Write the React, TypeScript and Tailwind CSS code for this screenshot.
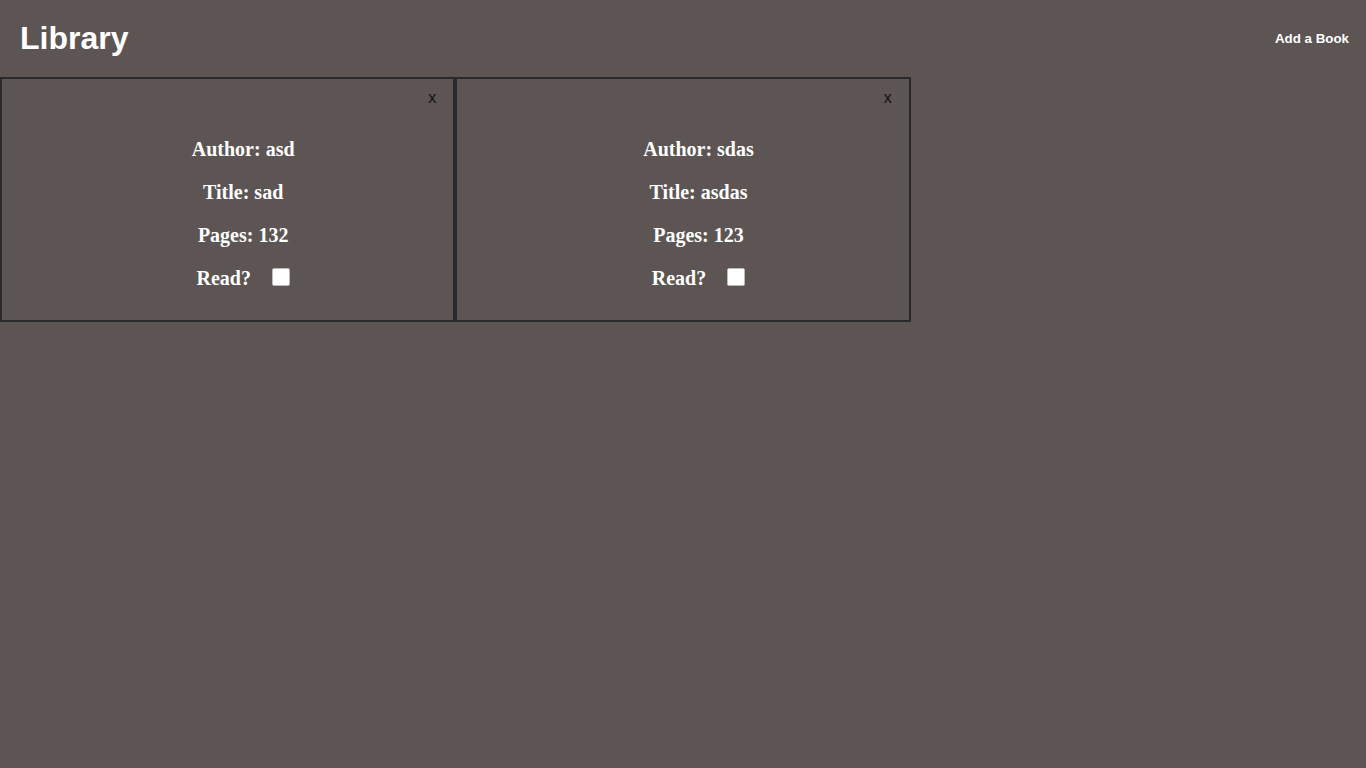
import { useState } from 'react'

type Book = {
  id: number
  author: string
  title: string
  pages: number
  read: boolean
}

const INITIAL: Book[] = [
  { id: 1, author: 'asd', title: 'sad', pages: 132, read: false },
  { id: 2, author: 'sdas', title: 'asdas', pages: 123, read: false },
]

export default function App() {
  const [books, setBooks] = useState<Book[]>(INITIAL)

  const toggleRead = (id: number) =>
    setBooks((bs) => bs.map((b) => (b.id === id ? { ...b, read: !b.read } : b)))

  const removeBook = (id: number) => setBooks((bs) => bs.filter((b) => b.id !== id))

  return (
    <div className="min-h-screen bg-[#5c5553] font-['Liberation_Sans',Arial,sans-serif]">
      {/* Header */}
      <header className="h-[76px] flex items-center justify-between pl-5 pr-[17px] mb-px">
        <h1 className="text-[32px] font-bold text-white leading-none">Library</h1>
        <button className="text-[13.33px] font-bold text-white mt-[2px]">Add a Book</button>
      </header>

      {/* Cards */}
      <div className="grid grid-cols-3">
        {books.map((b) => (
          <div key={b.id} className="relative h-[245px] border-2 border-[#2a2a2e]">
            <button
              onClick={() => removeBook(b.id)}
              className="absolute top-[9px] right-[17px] text-base leading-5 text-[#111]"
            >
              x
            </button>
            <div className="flex flex-col items-center gap-[19px] pt-[58px] pl-[31px] font-['Liberation_Serif','Times_New_Roman',serif] text-xl font-bold leading-6 text-white">
              <p>Author: {b.author}</p>
              <p>Title: {b.title}</p>
              <p>Pages: {b.pages}</p>
              <div className="flex items-center gap-[21px]">
                <span>Read?</span>
                <input
                  type="checkbox"
                  checked={b.read}
                  onChange={() => toggleRead(b.id)}
                  className="appearance-none w-[18px] h-[18px] -mt-[2px] rounded-[2px] bg-white border border-[#bbb] checked:bg-[#2a2a2e]"
                />
              </div>
            </div>
          </div>
        ))}
      </div>
    </div>
  )
}
